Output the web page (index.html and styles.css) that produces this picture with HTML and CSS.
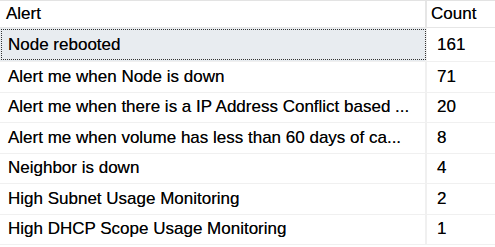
FILE: index.html
```html
<!DOCTYPE html>
<html>
<head>
<meta charset="utf-8">
<link rel="stylesheet" href="styles.css">
</head>
<body>
<div class="grid">
  <div class="row head">
    <div class="cell name">Alert</div>
    <div class="cell count">Count</div>
  </div>
  <div class="row first">
    <div class="cell name selected">Node rebooted</div>
    <div class="cell count">161</div>
  </div>
  <div class="row">
    <div class="cell name">Alert me when Node is down</div>
    <div class="cell count">71</div>
  </div>
  <div class="row">
    <div class="cell name">Alert me when there is a IP Address Conflict based ...</div>
    <div class="cell count">20</div>
  </div>
  <div class="row">
    <div class="cell name">Alert me when volume has less than 60 days of ca...</div>
    <div class="cell count">8</div>
  </div>
  <div class="row">
    <div class="cell name">Neighbor is down</div>
    <div class="cell count">4</div>
  </div>
  <div class="row">
    <div class="cell name">High Subnet Usage Monitoring</div>
    <div class="cell count">2</div>
  </div>
  <div class="row">
    <div class="cell name">High DHCP Scope Usage Monitoring</div>
    <div class="cell count">1</div>
  </div>
</div>
</body>
</html>
```

FILE: styles.css
```css
* { box-sizing: border-box; }
html, body {
  margin: 0;
  padding: 0;
  background: #ffffff;
}
body {
  font-family: "Liberation Sans", Arial, sans-serif;
  font-size: 17px;
  color: #000000;
  width: 495px;
  height: 247px;
  overflow: hidden;
}
.grid {
  display: flex;
  flex-direction: column;
  border-top: 1px solid #e3e3e3;
}
.row {
  display: grid;
  grid-template-columns: 427px 1fr;
  height: 30.5px;
  border-bottom: 1px solid #f0f0f0;
}
.row.head {
  height: 27px;
  border-bottom: 1px solid #e6e6e6;
}
.row.first {
  height: 34px;
}
.cell {
  display: flex;
  align-items: center;
  white-space: nowrap;
  overflow: hidden;
  padding-left: 8px;
  text-shadow: 0 0 0.3px rgba(0, 0, 0, 0.6);
}
.cell.name {
  border-right: 2px solid #f0f0f0;
}
.cell.count {
  padding-left: 10px;
}
.head .cell.name {
  padding-left: 6px;
  border-right-color: #e6e6e6;
}
.head .cell.count {
  padding-left: 4px;
}
.cell.selected {
  background: #e8ecf0;
  outline: 1px dotted #333333;
  outline-offset: -2px;
  border-right: 2px solid #f0f0f0;
}
```
